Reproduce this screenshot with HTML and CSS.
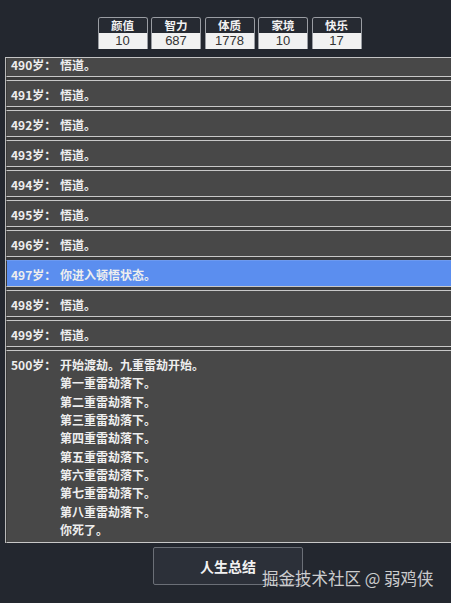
FILE: index.html
```html
<!DOCTYPE html>
<html lang="zh-CN">
<head>
    <meta charset="UTF-8">
    <meta name="viewport" content="width=device-width, initial-scale=1.0">
    <title>人生重开模拟器</title>
    <link rel="stylesheet" href="styles.css">
</head>
<body>
    <div class="page">
        <div class="stats">
            <div class="stat"><div class="stat-name">颜值</div><div class="stat-value">10</div></div>
            <div class="stat"><div class="stat-name">智力</div><div class="stat-value">687</div></div>
            <div class="stat"><div class="stat-name">体质</div><div class="stat-value">1778</div></div>
            <div class="stat"><div class="stat-name">家境</div><div class="stat-value">10</div></div>
            <div class="stat"><div class="stat-name">快乐</div><div class="stat-value">17</div></div>
        </div>

        <ul class="log" id="log">
            <li><span class="age">490岁：</span><div class="text">悟道。</div></li>
            <li><span class="age">491岁：</span><div class="text">悟道。</div></li>
            <li><span class="age">492岁：</span><div class="text">悟道。</div></li>
            <li><span class="age">493岁：</span><div class="text">悟道。</div></li>
            <li><span class="age">494岁：</span><div class="text">悟道。</div></li>
            <li><span class="age">495岁：</span><div class="text">悟道。</div></li>
            <li><span class="age">496岁：</span><div class="text">悟道。</div></li>
            <li class="active"><span class="age">497岁：</span><div class="text">你进入顿悟状态。</div></li>
            <li><span class="age">498岁：</span><div class="text">悟道。</div></li>
            <li><span class="age">499岁：</span><div class="text">悟道。</div></li>
            <li class="multi"><span class="age">500岁：</span><div class="text">开始渡劫。九重雷劫开始。<br>第一重雷劫落下。<br>第二重雷劫落下。<br>第三重雷劫落下。<br>第四重雷劫落下。<br>第五重雷劫落下。<br>第六重雷劫落下。<br>第七重雷劫落下。<br>第八重雷劫落下。<br>你死了。</div></li>
        </ul>

        <div class="actions">
            <button class="btn">人生总结</button>
        </div>
    </div>

    <div class="mark">掘金技术社区 @ 弱鸡侠</div>

    <script>
        // 日志总是滚到最新一年
        const log = document.getElementById("log");
        log.scrollTop = log.scrollHeight;
    </script>
</body>
</html>
```
FILE: styles.css
```css
html, body { margin: 0; height: 100%; }
body { background: #23272f; font-family: "Noto Sans CJK SC", "Noto Sans", sans-serif; color: #eee; overflow: hidden; position: relative; }
.page { padding: 17px 0 0 5px; }

.stats { display: flex; justify-content: center; gap: 3.5px; margin-left: 3px; }
.stat { box-sizing: border-box; width: 50px; border: 1px solid #9a9da3; border-bottom: none; border-radius: 3px 3px 0 0; overflow: hidden; }
.stat-name { height: 15px; line-height: 15px; font-size: 11.5px; font-weight: bold; text-align: center; color: #f2f2f2; background: #262a32; }
.stat-value { height: 16px; line-height: 16px; font-size: 13px; font-family: "Liberation Sans", Arial, sans-serif; text-align: center; color: #333; background: #f1f1f1; }

.log { list-style: none; margin: 8px 0 0 0; padding: 0; height: 485px; overflow: hidden; background: #3b3b3b; border-top: 1px solid #c4c4c4; border-left: 1px solid #b9b9b9; }
.log li { display: flex; margin-top: 3px; padding: 2px 5px 0 4px; background: #484848; border-top: 1px solid #c8c8c8; border-bottom: 1px solid #c8c8c8; border-left: 1px solid #3a3a3a; font-size: 12px; font-weight: bold; line-height: 23px; }
.log li:first-child { margin-top: 0; }
.log li.active { background: #5b8eef; border-top-color: #6d9af0; }
.log li.multi { padding-top: 5px; padding-bottom: 3px; line-height: 18.35px; }
.age { width: 49px; flex-shrink: 0; white-space: nowrap; }
.text { flex: 1; }

.actions { display: flex; justify-content: center; padding-top: 4px; }
.btn { width: 150px; height: 38px; background: #2c3039; border: 1px solid #6b6f77; border-radius: 2px; color: #f2f2f2; font-family: "Noto Sans CJK SC", sans-serif; font-size: 14px; font-weight: bold; cursor: pointer; }

.mark { position: absolute; left: 262px; top: 566px; font-size: 16.5px; color: rgba(235, 235, 235, 0.85); white-space: nowrap; }
```
